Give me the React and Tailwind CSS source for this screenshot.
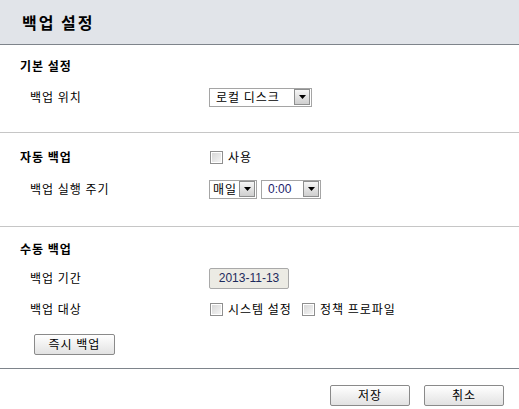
import React from 'react'

const ko = { fontFamily: '"Noto Sans CJK KR", "Noto Sans", sans-serif' }
const num = { fontFamily: '"Liberation Sans", Arial, sans-serif' }

const Arrow = () => (
  <span className="flex h-[16px] w-[16px] shrink-0 items-center justify-center border border-[#8e8f8f] bg-gradient-to-b from-[#f6f6f6] to-[#cfcfcf]">
    <svg width="7" height="4" viewBox="0 0 7 4">
      <path d="M0 0h7L3.5 4z" fill="#000" />
    </svg>
  </span>
)

const Select = ({ value, width, numeric, pad = 'pl-[6px]' }) => (
  <div
    className={`flex h-[19px] items-center justify-between border border-[#a5a5a5] bg-white pr-px ${pad} ${width}`}
  >
    <span
      className={`whitespace-nowrap text-[12px] leading-none ${numeric ? 'tracking-normal text-[#1c1c6a]' : 'text-black'}`}
      style={numeric ? num : ko}
    >
      {value}
    </span>
    <Arrow />
  </div>
)

const Check = ({ label }) => (
  <label className="flex items-center gap-[5px]">
    <span className="h-[13px] w-[13px] border border-[#8f8f8f] bg-gradient-to-br from-[#d4d4d4] to-[#f8f8f8] shadow-[inset_0_0_0_1px_#ffffff]" />
    <span className="whitespace-nowrap text-[12px] leading-none text-black">{label}</span>
  </label>
)

const Button = ({ children, width }) => (
  <button
    className={`h-[21px] rounded-[2px] border border-[#8a8a8a] bg-gradient-to-b from-white to-[#e2e2e2] text-[12px] leading-none tracking-[1px] text-black ${width}`}
  >
    {children}
  </button>
)

const Row = ({ label, children, className = '' }) => (
  <div className={`flex h-5 items-center ${className}`}>
    <div className="w-[209px] shrink-0 pl-[30px] text-[12px] leading-none text-black">{label}</div>
    <div className="flex items-center gap-[4px]">{children}</div>
  </div>
)

export default function App() {
  return (
    <div className="h-[409px] w-[519px] overflow-hidden bg-white tracking-[1px]" style={ko}>
      <div className="flex h-[45px] items-center border-b border-[#7e848b] bg-[#e1e4e9] pl-[22px]">
        <h1 className="text-[16px] font-bold leading-none tracking-[2px] text-black">백업 설정</h1>
      </div>

      <section className="border-b border-[#c6c6c6] pb-[25px] pt-[13px]">
        <div className="flex h-4 items-center pl-5 text-[12px] font-bold leading-none text-black">기본 설정</div>
        <Row label="백업 위치" className="mt-[13px]">
          <Select value="로컬 디스크" width="w-[103px]" />
        </Row>
      </section>

      <section className="border-b border-[#c6c6c6] pb-[27px] pt-[16px]">
        <div className="flex h-4 items-center">
          <div className="w-[209px] pl-5 text-[12px] font-bold leading-none text-black">자동 백업</div>
          <div className="pl-px">
            <Check label="사용" />
          </div>
        </div>
        <Row label="백업 실행 주기" className="mt-[14px]">
          <Select value="매일" width="w-[48px]" pad="pl-[3px]" />
          <Select value="0:00" width="w-[60px]" numeric />
        </Row>
      </section>

      <section className="border-b border-[#7e848b] pb-[13px] pt-[14px]">
        <div className="flex h-4 items-center pl-5 text-[12px] font-bold leading-none text-black">수동 백업</div>
        <Row label="백업 기간" className="mt-[11px]">
          <div
            className="flex h-[21px] w-[80px] items-center justify-center rounded-[2px] border border-[#a9a9a9] bg-[#ecebe4] text-[12px] leading-none tracking-normal text-[#1c2a5c]"
            style={num}
          >
            2013-11-13
          </div>
        </Row>
        <Row label="백업 대상" className="mt-[11px]">
          <div className="flex items-center gap-[10px] pl-px">
            <Check label="시스템 설정" />
            <Check label="정책 프로파일" />
          </div>
        </Row>
        <div className="mt-[11px] pl-[34px]">
          <Button width="w-[81px]">즉시 백업</Button>
        </div>
      </section>

      <div className="flex justify-end gap-[14px] pr-[15px] pt-[16px]">
        <Button width="w-[80px]">저장</Button>
        <Button width="w-[80px]">취소</Button>
      </div>
    </div>
  )
}
